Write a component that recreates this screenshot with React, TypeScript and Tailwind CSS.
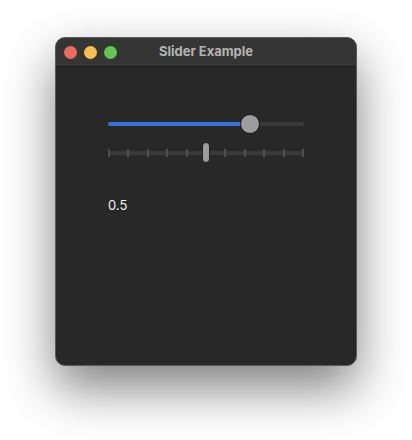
export default function App() {
  const ticks = Array.from({ length: 11 }, (_, i) => i);
  return (
    <div className="w-[412px] h-[440px] bg-white pl-[55px] pt-[37px] font-['Inter',sans-serif]">
      <div className="w-[302px] h-[329px] rounded-[10px] bg-[#282828] border border-[#5a5a5a] shadow-[0_22px_50px_rgba(0,0,0,0.5)] overflow-hidden flex flex-col">
        {/* Title bar */}
        <div className="relative h-[29px] bg-[#353535] border-b border-[#1c1c1c] flex items-center justify-center shrink-0">
          <div className="absolute left-[8px] top-[8px] flex gap-[7px]">
            <span className="w-[13px] h-[13px] rounded-full bg-[#ee6a5f]"></span>
            <span className="w-[13px] h-[13px] rounded-full bg-[#f5bf4f]"></span>
            <span className="w-[13px] h-[13px] rounded-full bg-[#62c554]"></span>
          </div>
          <span className="text-[13px] font-bold text-[#b4b4b4]">Slider Example</span>
        </div>

        {/* Content */}
        <div className="flex flex-col pl-[52px] pr-[53px] pt-[47px]">
          {/* Continuous slider */}
          <div className="relative h-5 w-[196px] flex items-center">
            <div className="w-full h-[4px] rounded-full bg-[#3a3a3a]"></div>
            <div className="absolute left-0 top-[8px] w-[142px] h-[4px] rounded-full bg-[#3a6fd8]"></div>
            <div className="absolute left-[132px] top-0 w-5 h-5 rounded-full bg-[#9d9d9d] border border-[#161616]"></div>
          </div>

          {/* Stepped slider */}
          <div className="relative mt-[8px] h-[22px] w-[196px] flex items-center">
            <div className="w-full h-[4px] bg-[#3a3a3a]"></div>
            <div className="absolute inset-0 flex justify-between items-center">
              {ticks.map((t) => (
                <span key={t} className="w-[2px] h-[8px] bg-[#4f4f4f]"></span>
              ))}
            </div>
            <div className="absolute left-[94px] top-0 w-[8px] h-[21px] rounded-full bg-[#9d9d9d] border border-[#1e1e1e]"></div>
          </div>

          <span className="mt-[33px] text-[13px] leading-4 text-[#f0f0f0]">0.5</span>
        </div>
      </div>
    </div>
  );
}
